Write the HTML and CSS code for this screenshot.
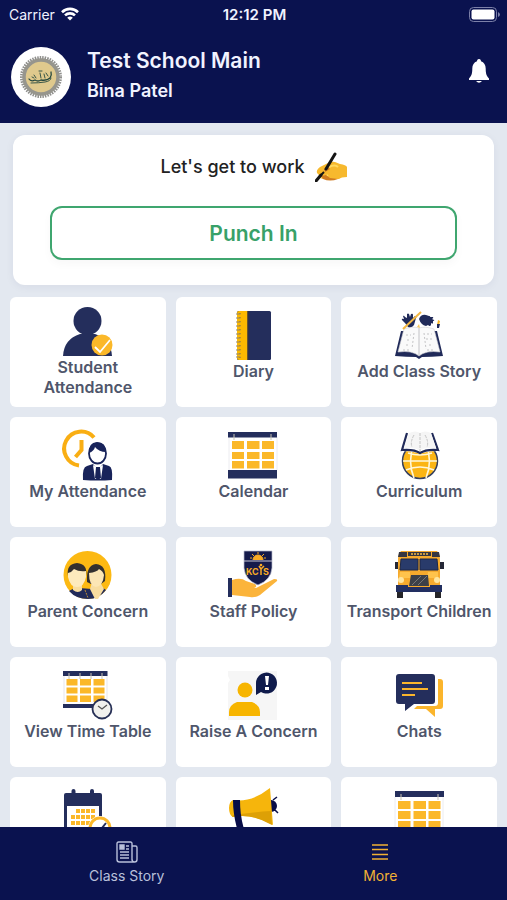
FILE: index.html
```
<!DOCTYPE html>
<html lang="en">
<head>
  <meta charset="UTF-8">
  <meta name="viewport" content="width=device-width, initial-scale=1">
  <title>Test School Main</title>
  <link rel="stylesheet" href="styles.css">
</head>
<body>
  <header class="header">
    <div class="status-bar">
      <div class="carrier">
        <span>Carrier</span>
        <svg width="18" height="14" viewBox="0 0 18 14" fill="none" stroke="#fff" stroke-width="2.6">
          <path d="M1 5.2a11.4 11.4 0 0 1 16 0M4 8.4a7.2 7.2 0 0 1 10 0"/>
          <path d="M9 13.6 6.2 10.8a4 4 0 0 1 5.6 0z" fill="#fff" stroke="none"/>
        </svg>
      </div>
      <div class="time">12:12 PM</div>
      <div class="battery">
        <svg width="31" height="15" viewBox="0 0 31 15">
          <rect x="0.5" y="0.5" width="27" height="14" rx="4" fill="none" stroke="#7c80a8"/>
          <rect x="2.5" y="2.5" width="23" height="10" rx="2" fill="#fff"/>
          <path d="M29 5v5q2-1 2-2.500t-2-2.500z" fill="#7c80a8"/>
        </svg>
      </div>
    </div>
    <div class="profile">
      <svg class="logo" viewBox="0 0 60 60">
        <circle cx="30" cy="30" r="30" fill="#fff"/>
        <circle cx="30" cy="30" r="19.500" fill="none" stroke="#8f8f8c" stroke-width="3" stroke-dasharray="1.500 1"/>
        <circle cx="30" cy="30" r="17" fill="#dfc98d" stroke="#96958d" stroke-width="3.500"/>
        <g fill="none" stroke="#26483f" stroke-linecap="round">
          <path d="M18 32q2 3 6 1q3 2 6 0q6 1 9-2q2-3 1-6" stroke-width="1.300"/>
          <path d="M20 36q8 0 14-1t6-4M25 31l-2-3M30 31l-1-5M34 31l-1-4M37 29l-2-3M28 24h3M21 30l2 1" stroke-width=".9"/>
        </g>
      </svg>
      <div class="names">
        <h1>Test School Main</h1>
        <p>Bina Patel</p>
      </div>
      <button class="bell" aria-label="Notifications">
        <svg width="20" height="24" viewBox="0 0 20 24" fill="#fff">
          <path d="M10 0c-1.500 0-2 1-2 2.300C5 3.300 3.300 6 3.300 9.500c0 5-.8 7.500-3.300 10V21h20v-1.500c-2.500-2.500-3.300-5-3.300-10 0-3.500-1.700-6.200-4.700-7.200C12 1 11.500 0 10 0zM7 22q3 3.500 6 0z"/>
        </svg>
      </button>
    </div>
  </header>

  <main class="content">
    <section class="punch-card">
      <p class="greeting">
        <span>Let's get to work</span>
        <svg width="32" height="30" viewBox="0 0 32 30">
          <path d="M5 15 13 11q4-2 7-1l5 2q6 1 7 3v10q-6 0-8 2H9q-4 0-4-3l-3-3q-1-3 3-6z" fill="#f7b92e"/>
          <path d="M14 15q6-3 9 0M5 24q4 2 8-1" fill="none" stroke="#ffda60" stroke-width="2"/>
          <path d="m9 17 4-2 2 2-5 3M6 24l5-1 4 3 8 1q-8 3-15 0z" fill="#d07b20"/>
          <path d="m20 2-9 15M6 23l-5 6" stroke="#151515" stroke-width="3" stroke-linecap="round"/>
          <path d="m9 20-5 5" stroke="#151515" stroke-width="2"/>
        </svg>
      </p>
      <button class="punch-button">Punch In</button>
    </section>

    <nav class="tiles">
      <a class="tile" href="#">
        <svg class="icon" viewBox="0 0 50 50">
          <circle cx="24.500" cy="14" r="14" fill="#242e5c"/>
          <path d="M0 49Q1 32 17 27h15q16 5 17 22z" fill="#242e5c"/>
          <circle cx="39" cy="38" r="10.500" fill="#fbb829"/>
          <path d="m32 40 5 5 10-12" fill="none" stroke="#fff" stroke-width="1.800"/>
        </svg>
        <span>Student<br>Attendance</span>
      </a>
      <a class="tile" href="#">
        <svg class="icon" viewBox="0 0 50 50">
          <rect x="9" width="34" height="49" rx="1.500" fill="#242e5c"/>
          <path d="M11 0h8.500v49H11q-2 0-2-2V2q0-2 2-2z" fill="#fcb900"/>
          <path d="M20 0v49" stroke="#3a3430"/>
          <path d="M8 3h4.500M8 46h4.500M8 7h4.500M8 11h4.500M8 15h4.500M8 19h4.500M8 23h4.500M8 27h4.500M8 31h4.500M8 35h4.500M8 39h4.500M8 43h4.500" stroke="#8b8474"/>
          <path d="M12 2v45" stroke="#967431" stroke-dasharray="1 3"/>
        </svg>
        <span>Diary</span>
      </a>
      <a class="tile" href="#">
        <svg class="icon" viewBox="0 0 50 50">
          <path d="m7 20-6 25q12 1 21 1l3 2 3-2q9 0 21-1l-6-25h-4v5H11v-5z" fill="#202a59"/>
          <path d="M10 18q9-3 15-1 6-2 15 1l6 23q-14-2-21 4-7-6-21-4z" fill="#fafafa" stroke="#d2d2d5" stroke-width=".6"/>
          <path d="M25 17v27" stroke="#dedee0" stroke-width="2"/>
          <path d="M12 24h5M13 29h4M12 34h3M9 39h8M33 23h5M32 28h6M35 34h3M33 39h8M20 22l-2 16M30 22l2 16" fill="none" stroke="#c4c4c6" stroke-dasharray="2 2"/>
          <path d="M9 5q1-1 2 1l2 1V3q1-1 2 0l1 3 1-3q2-1 2 1v3l2-2q2 0 1 2l-2 7q-2 3-6 2l-3-4-3-3q-1-2 2-1z" fill="#202a59"/>
          <path d="M25 8q2-5 7-4l3 1q2 0 1 1l3 0q1 1-1 2l2 1q1 1-1 1l0 2q0 1-2 0v2q-1 2-3 0l-2 1q-5-1-7-7z" fill="#202a59"/>
          <path d="M9 18 27 1" stroke="#f3b843" stroke-width="2"/>
          <path d="m44 9 2 1-1 4h-2z" fill="#f9b624"/><path d="M43 13h3l-1 4h-2z" fill="#202a59"/>
          <path d="m23 16 2-3 1 4z" fill="#f5c75e"/>
        </svg>
        <span>Add Class Story</span>
      </a>

      <a class="tile" href="#">
        <svg class="icon" viewBox="0 0 50 50">
          <path d="M31 6.500A17 17 0 1 0 16 34.500M18.500 9v10l-6 7" fill="none" stroke="#f9ae13" stroke-width="4"/>
          <path d="M20 49q-1-13 4-14l6-2 5 6 5-6 6 2q4 1 3 14-14 1-29 0z" fill="#18235a"/>
          <ellipse cx="34.500" cy="22.500" rx="8.500" ry="10" fill="#fff" stroke="#18235a" stroke-width="1.800"/>
          <path d="M26 22q-1-10 8-11 9 0 9 10-7 0-11-5-1 4-6 6z" fill="#18235a"/>
          <path d="m30 34 2 14h6l2-14-5 3z" fill="#fff"/><path d="m33 36-1 11 3 2 3-2-1-11z" fill="#18235a"/>
        </svg>
        <span>My Attendance</span>
      </a>
      <a class="tile" href="#">
        <svg class="icon" viewBox="0 0 50 50">
          <path d="M1 6v33M49 6v33" stroke="#ececf0"/>
          <path d="M0 1h49v5.500H0zM0 39h49v8.500H0z" fill="#242e5c"/>
          <path d="M6 3v6M43 3v6" stroke="#c9c5b5"/>
          <path d="M4 10h12v8H4zM19 10h12.500v8H19zM34 10h12v8H34zM4 21h12v7H4zM19 21h12.500v7H19zM34 21h12v7H34zM4 30h12v7.500H4zM19 30h12.500v7.500H19zM34 30h12v7.500H34z" fill="#fbb829"/>
        </svg>
        <span>Calendar</span>
      </a>
      <a class="tile" href="#">
        <svg class="icon" viewBox="0 0 50 50">
          <circle cx="26" cy="30" r="17.500" fill="#fbb514" stroke="#35405f" stroke-width="1.500"/>
          <path d="M9 30h34M12 39q14-6 28 0M20 14q-7 16 0 33M32 14q7 16 0 33M14 22q12 4 24 0" fill="none" stroke="#fff7d8" stroke-width="1.600"/>
          <path d="m13 2-6 18q12 0 19 3 7-3 19-3L38 2z" fill="#fff"/>
          <path d="m13 2-5 17q12-1 18 3 6-4 18-3L38 2" fill="none" stroke="#202a59" stroke-width="2.200"/>
          <path d="M15 2q7-3 11 0 5-3 11 0l5 15q-12-1-16 3-5-4-16-3z" fill="#f5f5f5"/>
          <path d="M26 2v18M20 4q-4 7-2 12M31 4q4 7 2 12" fill="none" stroke="#c4c4c4" stroke-dasharray="3 1"/>
        </svg>
        <span>Curriculum</span>
      </a>

      <a class="tile" href="#">
        <svg class="icon" viewBox="0 0 50 50">
          <circle cx="24.500" cy="24" r="24" fill="#fcb913"/>
          <path d="M6 40q4-3 10-3l13 1 8-2q4 1 6 3-7 9-18 9-12 0-19-8z" fill="#202a59"/>
          <path d="M10 32h9v7q-4 4-9 0zM29 31h8l4 7-6 10h-3l-5-10z" fill="#f8dda0"/>
          <path d="M24 31q-1-17 9-18 11 1 9 17l-4 3H28z" fill="#33302f"/>
          <path d="M26 22q8-1 10-4 4 2 5 6-1 11-8 12-7-1-7-14z" fill="#fce6b5"/>
          <path d="M5 25q-2-12 9-13 11 1 9 13z" fill="#33302f"/>
          <path d="M5 22q4-1 6-4 5 3 12 2v6q-2 10-9 10T5 26z" fill="#fdeabd"/>
          <path d="m22 39 3 8" stroke="#ba8b35" stroke-dasharray="2 1"/>
        </svg>
        <span>Parent Concern</span>
      </a>
      <a class="tile" href="#">
        <svg class="icon" viewBox="0 0 50 50">
          <path d="M4 29q9-3 14 1l9 3q3 3-1 4l-7-1 9 1 18-9q4 0 3 2L32 44q-5 3-10 2L4 44z" fill="#fbb43b"/>
          <path d="M0 27h4v19H0z" fill="#242e5c"/>
          <path d="M16 0h28v17q-1 12-14 17Q17 29 16 17z" fill="#151b4b" stroke="#b9bbcf" stroke-width=".7"/>
          <path d="M16 10h28" stroke="#c9c9d8"/>
          <path d="M25 9a5 5 0 0 1 10 0M30 1v2M24 3l2 2M36 3l-2 2M22 7h2M36 7h2" fill="#f9ab25" stroke="#f9ab25"/>
          <text x="18" y="24" class="shield-text">KC</text><text x="35" y="24" class="shield-text">S</text>
          <path d="m31 15 2 3 3-3M33 18v6" fill="none" stroke="#f9ab25" stroke-width="1.500"/><circle cx="33" cy="14" r="1.300" fill="#f9ab25"/>
        </svg>
        <span>Staff Policy</span>
      </a>
      <a class="tile" href="#">
        <svg class="icon" viewBox="0 0 50 50">
          <path d="M3 38h6v9H3zM41 38h6v9h-6z" fill="#252529"/>
          <path d="M1 11h3v7H1zM46 11h4v7h-4z" fill="#252836"/>
          <path d="M7 0h36q3 3 3 9v30H4V9q0-6 3-9z" fill="#f6aa2d"/>
          <path d="M5 1h8v5H4zM38 1h7l1 5h-8zM14 1h23v4H14z" fill="#353641"/>
          <path d="M17 3h17" stroke="#f7ba43" stroke-width="1.500" stroke-dasharray="2 1"/>
          <path d="M7 8h17v11H6zM26 8h17l1 11H26z" fill="#293b6b" stroke="#1c2748"/>
          <path d="M6 21h10v6H5zM34 21h10v6H33z" fill="#ffc34c"/>
          <path d="M17 24h17l1 11H15z" fill="#3c4048"/>
          <path d="m18 34 9-9M24 34l9-9" stroke="#777"/>
          <circle cx="7" cy="29" r="3" fill="#ffe6a0"/><circle cx="43" cy="29" r="3" fill="#ffe6a0"/>
          <path d="M2 34h12v2h22v-2h12v7H2z" fill="#222f61"/>
        </svg>
        <span>Transport Children</span>
      </a>

      <a class="tile" href="#">
        <svg class="icon" viewBox="0 0 50 50">
          <path d="M1 4v29M44 4v29" stroke="#e7e7ec"/>
          <path d="M0 0h44.500v5H0zM0 33h44.500v4H0z" fill="#242e5c"/>
          <path d="M6 2v6M17 2v6M28 2v6M39 2v6" stroke="#c8c3b5"/>
          <path d="M3.500 8h11v6.500h-11zM17 8h11v6.500H17zM30.500 8h11v6.500h-11zM3.500 16.500h11v6h-11zM17 16.500h11v6H17zM30.500 16.500h11v6h-11zM3.500 24.500h11V31h-11zM17 24.500h11V31H17zM30.500 24.500h11V31h-11z" fill="#fbb829"/>
          <circle cx="39" cy="38" r="9.500" fill="#f1f1ee" stroke="#273056" stroke-width="1.800"/>
          <path d="m35 35 4 3 5-4" fill="none" stroke="#555" stroke-width="1.300"/>
        </svg>
        <span>View Time Table</span>
      </a>
      <a class="tile" href="#">
        <svg class="icon" viewBox="0 0 50 50">
          <path d="M0 0h49v49H0V12l2-3-2-4z" fill="#f6f6f6"/>
          <circle cx="17" cy="19" r="7.500" fill="#f7b500"/>
          <path d="M1 45v-4q0-7 8-10h15q8 3 8 10v4z" fill="#f7b500"/>
          <path d="M28 24V12a10.500 10.500 0 1 1 5 9z" fill="#101b4c"/>
          <path d="M37 5h4l-1 9h-2zM37 16h4v3h-4z" fill="#fff"/>
        </svg>
        <span>Raise A Concern</span>
      </a>
      <a class="tile" href="#">
        <svg class="icon" viewBox="0 0 50 50">
          <path d="M44 8h2q3 0 3 3v24q0 3-3 3h-5v8l-9-8H20l3-3h18q3 0 3-3z" fill="#fbb52c"/>
          <path d="M5 3h33q3 0 3 3v24q0 3-3 3H20l-9 7v-7H5q-3 0-3-3V6q0-3 3-3z" fill="#242e5c"/>
          <path d="M8 12h20M8 18h26M8 24h13" stroke="#fbb52c" stroke-width="2.200"/>
        </svg>
        <span>Chats</span>
      </a>

      <a class="tile" href="#">
        <svg class="icon" viewBox="0 0 50 50">
          <path d="M3 2h34q2 0 2 2v44H1V4q0-2 2-2z" fill="#242e5c"/>
          <path d="M10.500 0v4M29 0v4" stroke="#242e5c" stroke-width="4" stroke-linecap="round"/>
          <path d="M4 15h32v31H4z" fill="#fff"/>
          <path d="M13 20h19M8 26h24M8 32h20M8 38h17" stroke="#fbb829" stroke-width="4" stroke-dasharray="4 1"/>
          <circle cx="37" cy="37" r="12" fill="#fff"/>
          <circle cx="37" cy="37" r="10" fill="#fff" stroke="#fbb829" stroke-width="3"/>
          <path d="m32 39 3 3 8-10" fill="none" stroke="#242e5c" stroke-width="2"/>
        </svg>
        <span></span>
      </a>
      <a class="tile" href="#">
        <svg class="icon" viewBox="0 0 50 50">
          <circle cx="43" cy="15" r="6" fill="#080d48"/>
          <path d="m45 9 4-3M47 19l3 3" stroke="#080d48" stroke-width="1.500"/>
          <path d="M5 9q18 3 37-12l3 37q-20-12-40-8-4-2-4-9 0-6 4-8z" fill="#f6b50c"/>
          <path d="M5 24q22-3 38-4l1 14q-20-12-40-8z" fill="#dda006"/>
          <path d="M5 9h7q0 19 6 35h-7Q5 26 5 9z" fill="#080d48"/>
        </svg>
        <span></span>
      </a>
      <a class="tile" href="#">
        <svg class="icon" viewBox="0 0 50 50">
          <path d="M1 6v40M49 6v40" stroke="#ececf0"/>
          <path d="M1 0h49v6H1zM1 44h49v5H1z" fill="#242e5c"/>
          <path d="M7 3v6M44 3v6" stroke="#c9c5b5"/>
          <path d="M4 10h12.500v8H4zM19.500 10H32v8H19.500zM34.500 10h12v8h-12zM4 20h12.500v8H4zM19.500 20H32v8H19.500zM34.500 20h12v8h-12zM4 30h12.500v9H4zM19.500 30H32v9H19.500zM34.500 30h12v9h-12z" fill="#fbb829"/>
        </svg>
        <span></span>
      </a>
    </nav>
  </main>

  <nav class="tab-bar">
    <a class="tab" href="#">
      <svg width="22" height="22" viewBox="0 0 22 22" fill="none" stroke="currentColor" stroke-width="1.400">
        <path d="M16 19.500V2.500Q16 1 14.500 1h-12Q1 1 1 2.500v16Q1 21 3.500 21h15q2.500 0 2.500-2.500v-12Q21 5 19.500 5H16M16 18q0 3 2.500 3M4 11h9M4 14h9M4 17h9M10 5h3M10 8h3"/>
        <path d="M4 4h4v4H4z" fill="currentColor"/>
      </svg>
      <span>Class Story</span>
    </a>
    <a class="tab active" href="#">
      <svg width="22" height="22" viewBox="0 0 22 22" stroke="currentColor" stroke-width="1.600">
        <path d="M3 4h16M3 8.500h16M3 13.500h16M3 18h16"/>
      </svg>
      <span>More</span>
    </a>
  </nav>
</body>
</html>
```

FILE: styles.css
```
* {
  box-sizing: border-box;
}

body {
  display: flex;
  flex-direction: column;
  height: 100vh;
  margin: 0;
  font-family: Inter, "Liberation Sans", sans-serif;
  background: #e3e8f0;
}

a {
  text-decoration: none;
}

.header {
  padding-bottom: 16px;
  color: #f1f3ff;
  background: #0a124f;
}

.status-bar {
  display: grid;
  grid-template-columns: 1fr auto 1fr;
  align-items: center;
  height: 28px;
  padding: 0 7px 0 9px;
  font-size: 14px;
}

.carrier {
  display: flex;
  align-items: center;
  gap: 6px;
}

.time {
  font-size: 15px;
  font-weight: 600;
}

.battery {
  display: flex;
  justify-content: flex-end;
}

.profile {
  display: flex;
  align-items: center;
  padding: 19px 18px 0 11px;
}

.logo {
  width: 60px;
  height: 60px;
}

.names {
  flex: 1;
  margin: 0 0 4px 16px;
}

.names h1 {
  margin: 0 0 8px;
  font-size: 21px;
  font-weight: 600;
  line-height: 24px;
}

.names p {
  margin: 0;
  font-size: 18px;
  font-weight: 600;
  line-height: 20px;
}

.bell {
  display: flex;
  margin-bottom: 12px;
  padding: 0;
  border: none;
  background: none;
}

.content {
  flex: 1;
  min-height: 0;
  overflow-y: auto;
  scrollbar-width: none;
}

.punch-card {
  margin: 12px 13px;
  padding: 16px 37px 25px;
  border-radius: 12px;
  background: #fff;
  box-shadow: 0 2px 8px rgba(30, 40, 80, 0.06);
}

.greeting {
  display: flex;
  align-items: center;
  justify-content: center;
  gap: 10px;
  margin: 0 0 23px;
  font-size: 18px;
  font-weight: 500;
  line-height: 32px;
  color: #222;
}

.punch-button {
  width: 100%;
  height: 54px;
  border: 2px solid #3fa66f;
  border-radius: 12px;
  font-family: inherit;
  font-size: 21px;
  font-weight: 600;
  color: #38a169;
  background: #fff;
  box-shadow: 0 4px 10px rgba(0, 0, 0, 0.03);
  cursor: pointer;
}

.tiles {
  display: grid;
  grid-template-columns: repeat(3, 1fr);
  gap: 10px;
  padding: 0 10px 10px;
}

.tile {
  display: flex;
  flex-direction: column;
  align-items: center;
  justify-content: center;
  height: 110px;
  border-radius: 6px;
  font-size: 16px;
  font-weight: 600;
  line-height: 20px;
  text-align: center;
  color: #4f566b;
  background: #fff;
}

.tile span {
  min-height: 32px;
}

.icon {
  flex: none;
  width: 50px;
  height: 50px;
  overflow: visible;
}

.shield-text {
  font-size: 9px;
  font-weight: 700;
  fill: #f9ab25;
}

.tab-bar {
  display: flex;
  height: 73px;
  background: #0a124f;
}

.tab {
  flex: 1;
  display: flex;
  flex-direction: column;
  align-items: center;
  gap: 4px;
  padding-top: 14px;
  font-size: 14px;
  line-height: 18px;
  color: #b9c0da;
}

.tab.active {
  color: #f2b134;
}
```
